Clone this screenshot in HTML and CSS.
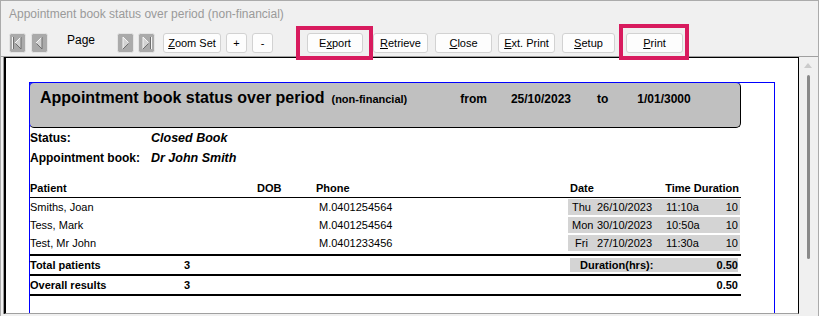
FILE: index.html
```html
<!DOCTYPE html>
<html>
<head>
<meta charset="utf-8">
<title>Appointment book status over period</title>
<link rel="stylesheet" href="styles.css">
</head>
<body>
<div class="window">
  <div class="titlebar">Appointment book status over period (non-financial)</div>
  <div class="toolbar">
    <span class="nav">
      <svg width="17" height="20" viewBox="0 0 17 20"><rect x="0.5" y="0.5" width="16" height="19" rx="2" fill="#aaaaaa" stroke="#e4e4e4"/><rect x="3" y="4" width="1" height="12" fill="#f4f4f4"/><rect x="4" y="4" width="1" height="12" fill="#707070"/><path d="M6 10 L12 4 L12 16 Z" fill="#d2d2d2"/><path d="M6 10 L12 4" fill="none" stroke="#f6f6f6"/><path d="M12 4 L12 16 L6.5 10.5" fill="none" stroke="#6e6e6e"/></svg>
    </span>
    <span class="nav nav-prev">
      <svg width="17" height="20" viewBox="0 0 17 20"><rect x="0.5" y="0.5" width="16" height="19" rx="2" fill="#aaaaaa" stroke="#e4e4e4"/><path d="M5 10 L11 4 L11 16 Z" fill="#d2d2d2"/><path d="M5 10 L11 4" fill="none" stroke="#f6f6f6"/><path d="M11 4 L11 16 L5.5 10.5" fill="none" stroke="#6e6e6e"/></svg>
    </span>
    <span class="page-label">Page</span>
    <span class="nav nav-next">
      <svg width="17" height="20" viewBox="0 0 17 20"><rect x="0.5" y="0.5" width="16" height="19" rx="2" fill="#aaaaaa" stroke="#e4e4e4"/><path d="M12 10 L6 4 L6 16 Z" fill="#d2d2d2"/><path d="M6 16 L6 4 L11.5 9.5" fill="none" stroke="#f6f6f6"/><path d="M6 16 L11.5 10.5" fill="none" stroke="#6e6e6e"/></svg>
    </span>
    <span class="nav nav-last">
      <svg width="17" height="20" viewBox="0 0 17 20"><rect x="0.5" y="0.5" width="16" height="19" rx="2" fill="#aaaaaa" stroke="#e4e4e4"/><path d="M11 10 L5 4 L5 16 Z" fill="#d2d2d2"/><path d="M5 16 L5 4 L10.5 9.5" fill="none" stroke="#f6f6f6"/><path d="M5 16 L10.5 10.5" fill="none" stroke="#6e6e6e"/><rect x="12" y="4" width="1" height="12" fill="#707070"/><rect x="13" y="4" width="1" height="12" fill="#f4f4f4"/></svg>
    </span>
    <span class="btn btn-zoom"><u>Z</u>oom Set</span>
    <span class="btn btn-plus">+</span>
    <span class="btn btn-minus">-</span>
    <span class="btn btn-export">E<u>x</u>port</span>
    <span class="btn btn-retrieve"><u>R</u>etrieve</span>
    <span class="btn btn-close"><u>C</u>lose</span>
    <span class="btn btn-ext"><u>E</u>xt. Print</span>
    <span class="btn btn-setup"><u>S</u>etup</span>
    <span class="btn btn-print"><u>P</u>rint</span>
    <span class="highlight hl-export"></span>
    <span class="highlight hl-print"></span>
  </div>
  <div class="viewer">
    <div class="canvas">
      <div class="page">
        <div class="report-head">
          <span class="rh-title">Appointment book status over period</span>
          <span class="rh-sub">(non-financial)</span>
          <span class="rh-from">from</span>
          <span class="rh-date">25/10/2023</span>
          <span class="rh-to">to</span>
          <span class="rh-date2">1/01/3000</span>
        </div>
        <div class="info-row"><span>Status:</span><span class="info-val">Closed Book</span></div>
        <div class="info-row"><span>Appointment book:</span><span class="info-val">Dr John Smith</span></div>

        <div class="table">
          <div class="head-row">
            <span>Patient</span>
            <span>DOB</span>
            <span>Phone</span>
            <span>Date</span>
            <span class="head-right">Time Duration</span>
          </div>
          <div class="row">
            <span>Smiths, Joan</span><span></span><span class="phone">M.0401254564</span>
            <span class="when"><span class="day">Thu</span><span class="date">26/10/2023</span><span class="time">11:10a</span><span class="dur">10</span></span>
          </div>
          <div class="row">
            <span>Tess, Mark</span><span></span><span class="phone">M.0401254564</span>
            <span class="when"><span class="day">Mon</span><span class="date">30/10/2023</span><span class="time">10:50a</span><span class="dur">10</span></span>
          </div>
          <div class="row">
            <span>Test, Mr John</span><span></span><span class="phone">M.0401233456</span>
            <span class="when"><span class="day">&nbsp;Fri</span><span class="date">27/10/2023</span><span class="time">11:30a</span><span class="dur">10</span></span>
          </div>
          <div class="total-row">
            <span>Total patients</span><span>3</span>
            <span class="total-box"><span>Duration(hrs):</span><span>0.50</span></span>
          </div>
          <div class="total-row total-last">
            <span>Overall results</span><span>3</span>
            <span class="total-plain">0.50</span>
          </div>
        </div>
      </div>
    </div>
    <div class="scrollbar">
      <span class="sb-arrow"></span>
      <span class="sb-thumb"></span>
    </div>
  </div>
</div>
</body>
</html>
```

FILE: styles.css
```css
* { box-sizing: border-box; }
html, body { margin: 0; padding: 0; }
body {
  width: 819px;
  height: 316px;
  overflow: hidden;
  background: #f0f0f0;
  font-family: "Liberation Sans", Arial, sans-serif;
  color: #000;
}
.window {
  height: 316px;
  border: 1px solid #ababab;
  border-bottom: none;
  display: flex;
  flex-direction: column;
}
.titlebar {
  height: 24px;
  padding: 6px 0 0 8px;
  font-size: 12px;
  line-height: 14px;
  color: #9a9a9a;
}
.toolbar {
  position: relative;
  height: 32px;
  padding: 8px 0 0 8px;
  display: flex;
  align-items: flex-start;
  border-bottom: 1px solid #a0a0a0;
}
.nav { display: block; width: 17px; height: 20px; }
.nav svg { display: block; }
.nav-prev { margin-left: 5px; }
.page-label {
  margin-left: 19px;
  width: 28px;
  font-size: 12px;
  line-height: 14px;
}
.nav-next { margin-left: 22px; }
.nav-last { margin-left: 4px; }

.btn {
  display: block;
  height: 20px;
  border: 1px solid #d2d2d2;
  border-radius: 3px;
  background: #fdfdfd;
  font-size: 11px;
  line-height: 18px;
  text-align: center;
  white-space: nowrap;
}
.btn-zoom { margin-left: 8px; width: 58px; }
.btn-plus { margin-left: 5px; width: 21px; }
.btn-minus { margin-left: 5px; width: 21px; }
.btn-export { margin-left: 34px; width: 56px; }
.btn-retrieve { margin-left: 10px; width: 55px; }
.btn-close { margin-left: 7px; width: 57px; }
.btn-ext { margin-left: 6px; width: 57px; }
.btn-setup { margin-left: 7px; width: 53px; }
.btn-print { margin-left: 11px; width: 57px; }

.highlight {
  position: absolute;
  border: 4px solid #d81b5e;
  z-index: 3;
}
.hl-export { left: 295px; top: 1px; width: 77px; height: 34px; }
.hl-print { left: 618px; top: -1px; width: 70px; height: 36px; }

.viewer {
  flex: 1;
  display: flex;
  padding-left: 3px;
}
.canvas {
  width: 795px;
  height: 257px;
  background: #fff;
  border-left: 2px solid #000;
  border-top: 1px solid #000;
  border-right: 1px solid #000;
  border-bottom: 1px solid #a0a0a0;
  box-shadow: -1px 0 0 #9a9a9a;
  overflow: hidden;
}
.page {
  margin: 24px 0 0 23px;
  width: 746px;
  height: 300px;
  border: 1px solid #0000ff;
  border-bottom: none;
}
.report-head {
  margin: -1px 0 0 -1px;
  width: 712px;
  height: 46px;
  border: 1px solid #000;
  border-top-color: #0000ff;
  border-left-color: #0000ff;
  border-radius: 5px;
  background: #c0c0c0;
  display: flex;
  align-items: baseline;
  padding: 6px 0 0 10px;
  font-weight: bold;
  font-size: 12px;
  line-height: 18px;
  white-space: nowrap;
}
.rh-title { font-size: 16px; }
.rh-sub { font-size: 11px; margin-left: 7px; }
.rh-from { margin-left: 53px; }
.rh-date { margin-left: 24px; }
.rh-to { margin-left: 26px; }
.rh-date2 { margin-left: 29px; }

.info-row {
  display: grid;
  grid-template-columns: 121px auto;
  height: 20px;
  font-size: 12px;
  line-height: 20px;
  font-weight: bold;
  white-space: nowrap;
}
.info-val { font-style: italic; font-size: 12.5px; }

.table {
  margin-top: 13px;
  width: 711px;
  font-size: 11px;
}
.head-row {
  display: grid;
  grid-template-columns: 227px 59px 254px 1fr auto;
  height: 17px;
  line-height: 14px;
  font-weight: bold;
  border-bottom: 1px solid #000;
}
.head-right { padding-right: 2px; }
.row {
  display: grid;
  grid-template-columns: 227px 59px 252px 172px;
  align-items: start;
  height: 18px;
  padding-top: 1px;
  line-height: 16px;
  white-space: nowrap;
}
.phone { padding-left: 3px; }
.when {
  display: flex;
  height: 16px;
  background: #d4d4d4;
  padding: 0 2px 0 4px;
}
.day { width: 25px; }
.date { width: 69px; }
.time { flex: 1; }
.dur { text-align: right; }

.total-row {
  display: grid;
  grid-template-columns: 154px 386px 168px;
  align-items: start;
  height: 20px;
  margin-top: 2px;
  border-top: 2px solid #000;
  font-weight: bold;
  line-height: 18px;
  white-space: nowrap;
}
.total-row + .total-row { margin-top: 0; }
.total-last {
  height: 22px;
  border-bottom: 2px solid #000;
}
.total-box {
  display: flex;
  justify-content: space-between;
  margin-top: 2px;
  height: 14px;
  line-height: 14px;
  background: #d4d4d4;
  padding-left: 10px;
}
.total-plain { text-align: right; }

.scrollbar {
  width: 19px;
  display: flex;
  flex-direction: column;
  align-items: flex-start;
  padding-top: 6px;
  background: #f0f0f0;
}
.sb-arrow {
  margin-left: 5px;
  width: 0;
  height: 0;
  border-left: 4px solid transparent;
  border-right: 4px solid transparent;
  border-bottom: 5px solid #cbcbcb;
}
.sb-thumb {
  margin: 7px 0 0 8px;
  width: 3px;
  height: 184px;
  border-radius: 2px;
  background: #8a8a8a;
}
```
